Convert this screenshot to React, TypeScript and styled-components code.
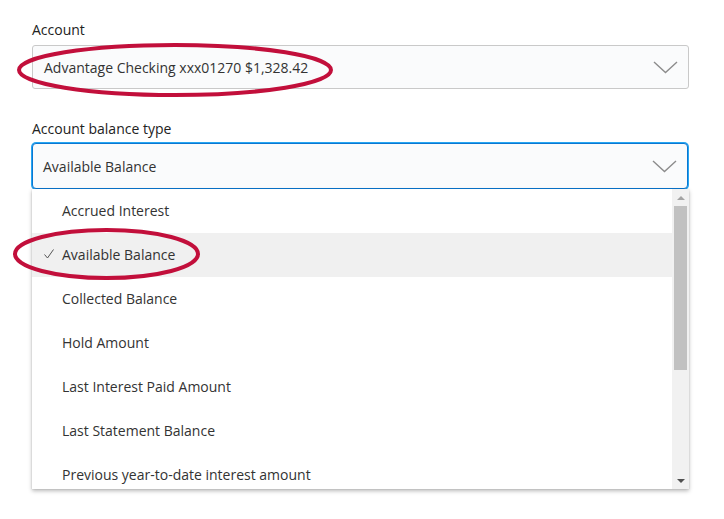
import React from 'react'
import styled, { createGlobalStyle } from 'styled-components'

const GlobalStyle = createGlobalStyle`
  html, body {
    margin: 0;
    padding: 0;
    background: #ffffff;
  }
  body {
    font-family: 'Open Sans', 'Liberation Sans', sans-serif;
    color: #333333;
  }
`

const Page = styled.div`
  position: relative;
  width: 724px;
  height: 519px;
  padding: 20px 0 0 32px;
  box-sizing: border-box;
  overflow: hidden;
`

const Form = styled.div`
  width: 657px;
  display: flex;
  flex-direction: column;
`

const Label = styled.label<{ $gap: number }>`
  font-size: 14px;
  line-height: 20px;
  color: #222222;
  margin-bottom: ${(props) => props.$gap}px;
`

const Select = styled.div<{ $focused?: boolean }>`
  box-sizing: border-box;
  height: ${(props) => (props.$focused ? 46 : 44)}px;
  display: flex;
  align-items: center;
  justify-content: space-between;
  padding: 0 10px 0 ${(props) => (props.$focused ? 10 : 11)}px;
  background: #fafbfc;
  border: 1px solid ${(props) => (props.$focused ? '#0a77d2' : '#c9c9c9')};
  border-radius: ${(props) => (props.$focused ? 4 : 3)}px;
  box-shadow: ${(props) => (props.$focused ? '0 0 0 1px #27a6f1' : 'none')};
  font-size: 14px;
  color: #333333;
  margin: ${(props) => (props.$focused ? '0 1px 0 0' : '0 0 30px 0')};
`

const Chevron = () => (
  <svg width="25" height="13" viewBox="0 0 25 13">
    <polyline points="1,1 12.5,11.5 24,1" fill="none" stroke="#8c8c8c" strokeWidth="1.4" />
  </svg>
)

const Dropdown = styled.div`
  height: 300px;
  display: flex;
  background: #ffffff;
  box-shadow: 0 2px 4px rgba(0, 0, 0, 0.28), 0 0 1px rgba(0, 0, 0, 0.2);
  overflow: hidden;
`

const OptionList = styled.ul`
  flex: 1;
  list-style: none;
  margin: 0;
  padding: 0;
`

const Option = styled.li<{ $selected?: boolean }>`
  position: relative;
  box-sizing: border-box;
  height: 44px;
  display: flex;
  align-items: center;
  padding: 0 0 2px 30px;
  font-size: 14px;
  color: #333333;
  background: ${(props) => (props.$selected ? '#f0f0f0' : 'transparent')};
`

const Check = styled.svg`
  position: absolute;
  left: 12px;
  top: 16px;
`

const Scrollbar = styled.div`
  width: 17px;
  background: #f1f1f1;
  display: flex;
  flex-direction: column;
  align-items: center;
`

const ArrowButton = styled.div<{ $down?: boolean }>`
  height: 17px;
  width: 17px;
  display: flex;
  align-items: center;
  justify-content: center;

  &::after {
    content: '';
    width: 0;
    height: 0;
    border-left: 4px solid transparent;
    border-right: 4px solid transparent;
    ${(props) =>
      props.$down
        ? 'border-top: 4px solid #505050;'
        : 'border-bottom: 4px solid #a3a3a3;'}
  }
`

const Track = styled.div`
  flex: 1;
  width: 13px;
`

const Thumb = styled.div`
  height: 164px;
  background: #c1c1c1;
`

const Annotation = styled.svg`
  position: absolute;
  pointer-events: none;
`

const options = [
  'Accrued Interest',
  'Available Balance',
  'Collected Balance',
  'Hold Amount',
  'Last Interest Paid Amount',
  'Last Statement Balance',
  'Previous year-to-date interest amount'
]

const selected = 'Available Balance'

export default function App() {
  return (
    <>
      <GlobalStyle />
      <Page>
        <Form>
          <Label $gap={5}>Account</Label>
          <Select>
            <span>Advantage Checking xxx01270 $1,328.42</span>
            <Chevron />
          </Select>

          <Label $gap={4}>Account balance type</Label>
          <Select $focused>
            <span>{selected}</span>
            <Chevron />
          </Select>

          <Dropdown>
            <OptionList>
              {options.map((opt) => (
                <Option key={opt} $selected={opt === selected}>
                  {opt === selected && (
                    <Check width="10" height="10" viewBox="0 0 10 10">
                      <polyline points="0.5,5.5 3.5,9 9.5,0.5" fill="none" stroke="#555" strokeWidth="1" />
                    </Check>
                  )}
                  {opt}
                </Option>
              ))}
            </OptionList>
            <Scrollbar>
              <ArrowButton />
              <Track>
                <Thumb />
              </Track>
              <ArrowButton $down />
            </Scrollbar>
          </Dropdown>
        </Form>

        <Annotation style={{ left: 15, top: 41 }} width="320" height="58">
          <ellipse cx="160" cy="29" rx="156" ry="25" fill="none" stroke="#c20f3b" strokeWidth="4" />
        </Annotation>
        <Annotation style={{ left: 11, top: 226 }} width="191" height="56">
          <ellipse cx="95.5" cy="28" rx="91.5" ry="24" fill="none" stroke="#c20f3b" strokeWidth="4" />
        </Annotation>
      </Page>
    </>
  )
}
